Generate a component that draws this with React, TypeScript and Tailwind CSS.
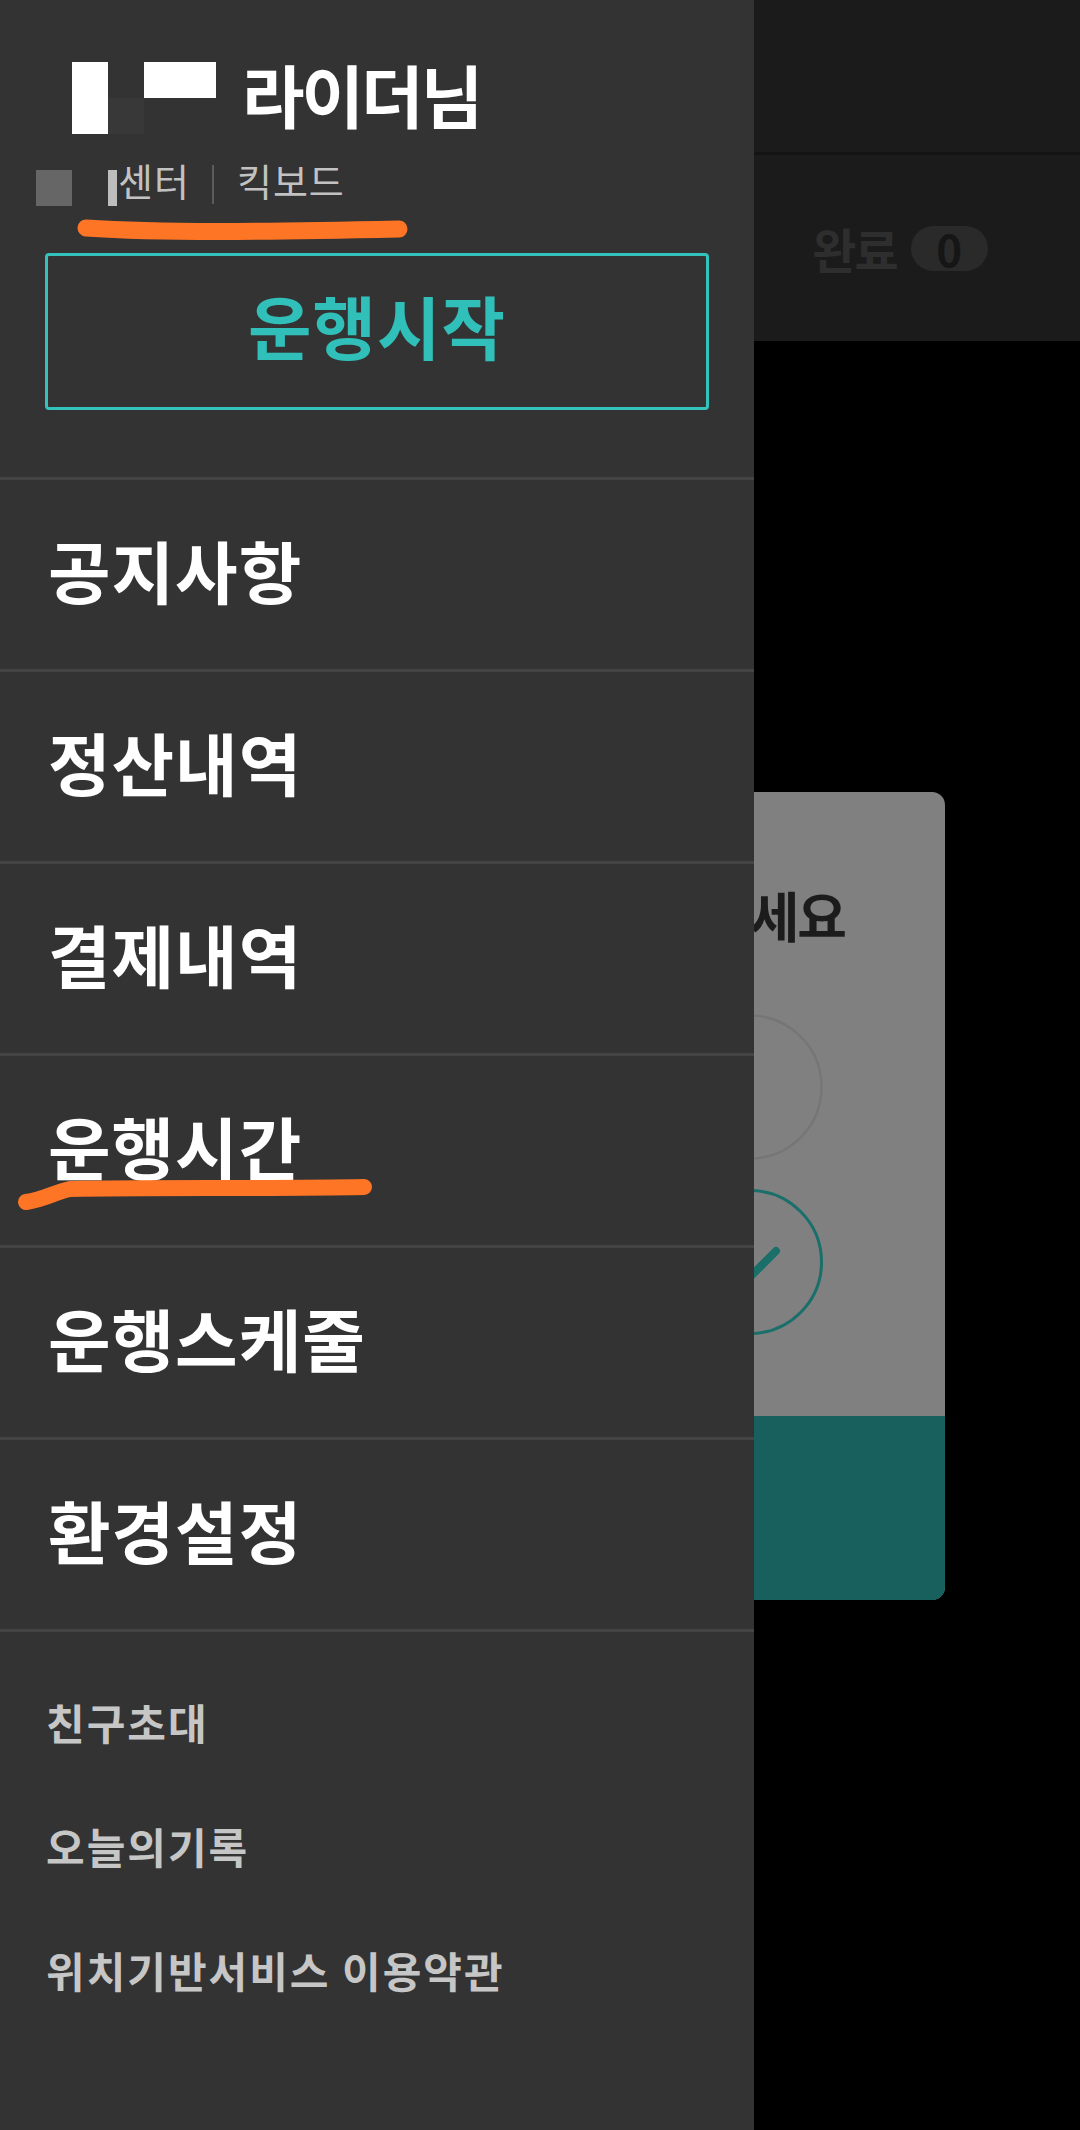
import React from 'react'

const font = { fontFamily: '"Noto Sans CJK KR", "Noto Sans", sans-serif' }

const menuItems = ['공지사항', '정산내역', '결제내역', '운행시간', '운행스케줄', '환경설정']
const subItems = ['친구초대', '오늘의기록', '위치기반서비스 이용약관']

function Background() {
  return (
    <div className="absolute inset-0 flex flex-col bg-black">
      <div className="h-[155px] bg-[#1b1b1b] border-b-[3px] border-[#141414]" />
      <div className="h-[186px] bg-[#1b1b1b] grid grid-cols-3">
        <div className="flex items-center justify-center text-[48px] font-bold text-[#2c2c2c]">대기</div>
        <div className="flex items-center justify-center text-[48px] font-bold text-[#2c2c2c]">진행</div>
        <div className="flex items-center justify-center gap-[14px]">
          <span className="text-[48px] font-bold leading-none tracking-[-2px] text-[#2e2e2e]">완료</span>
          <span className="w-[77px] h-[45px] rounded-full bg-[#2a2a2a] flex items-center justify-center text-[44px] font-bold leading-none text-[#161616]">
            0
          </span>
        </div>
      </div>

      {/* dimmed dialog behind the drawer */}
      <div className="absolute left-[135px] top-[792px] w-[810px] h-[808px] rounded-[13px] overflow-hidden bg-[#808080] flex flex-col">
        <div className="flex-1 flex flex-col">
          <div className="flex justify-end pr-[100px] pt-[96px]">
            <span className="text-[54px] font-bold leading-none tracking-[-2px] text-[#1c1c1c]">운행방식을 선택하세요</span>
          </div>
          <div className="flex flex-col items-end pr-[122px] pt-[72px] gap-[29px]">
            <svg width="146" height="146" viewBox="0 0 146 146">
              <circle cx="73" cy="73" r="71.5" fill="none" stroke="#767676" strokeWidth="2.5" />
            </svg>
            <svg width="146" height="146" viewBox="0 0 146 146">
              <circle cx="73" cy="73" r="71.5" fill="none" stroke="#1a6f6b" strokeWidth="3" />
              <path d="M48 73 L68 93 L99 62" fill="none" stroke="#1a6f6b" strokeWidth="8" strokeLinecap="round" strokeLinejoin="round" />
            </svg>
          </div>
        </div>
        <div className="h-[184px] bg-[#17605e]" />
      </div>
    </div>
  )
}

function Drawer() {
  return (
    <div className="absolute left-0 top-0 w-[754px] h-[2130px] bg-[#333333] flex flex-col">
      <div className="h-[477px] flex flex-col">
        <div className="mt-[62px] h-[72px] flex items-center">
          <div className="ml-[72px] w-[36px] h-[72px] bg-white" />
          <div className="w-[36px] h-[72px] flex flex-col">
            <div className="h-[36px]" />
            <div className="h-[36px] bg-[#383838]" />
          </div>
          <div className="w-[72px] h-[72px] flex flex-col">
            <div className="h-[36px] bg-white" />
          </div>
          <span className="ml-[26px] pb-[8px] text-[68px] font-bold leading-none tracking-[-3px] text-white">라이더님</span>
        </div>
        <div className="mt-[28px] h-[44px] flex items-center text-[38px] leading-none text-[#c2c2c2] tracking-[1px]">
          <div className="ml-[36px] w-[36px] h-[36px] self-end bg-[#666666]" />
          <div className="ml-[36px] w-[9px] h-[36px] self-end bg-[#bdbdbd]" />
          <span className="ml-[1px] pb-[8px]">센터</span>
          <div className="ml-[22px] w-[2px] h-[39px] bg-[#5c5c5c]" />
          <span className="ml-[23px] pb-[8px]">킥보드</span>
        </div>
        <div className="mt-[47px] mx-[45px] h-[157px] border-[3px] border-[#33c2bc] rounded-[4px] flex items-center justify-center">
          <span className="pb-[12px] text-[69px] font-bold leading-none tracking-[1px] text-[#30c0b9]">운행시작</span>
        </div>
      </div>

      <div className="border-t-[3px] border-[#444444]">
        {menuItems.map((item) => (
          <div key={item} className="h-[192px] border-b-[3px] border-[#444444] flex items-center pl-[48px]">
            <span className="pb-[9px] text-[68px] font-bold leading-none tracking-[1px] text-white">{item}</span>
          </div>
        ))}
      </div>

      <div className="pt-[32px] flex flex-col">
        {subItems.map((item) => (
          <div key={item} className="h-[124px] flex items-center pl-[46px]">
            <span className="pb-[8px] text-[42px] font-bold leading-none tracking-[2px] text-[#c6c6c6]">{item}</span>
          </div>
        ))}
      </div>

      {/* hand-drawn orange marks */}
      <svg className="absolute left-0 top-0 pointer-events-none" width="754" height="1240" viewBox="0 0 754 1240">
        <path d="M86 228 C 160 233, 260 232, 399 229" fill="none" stroke="#ff7526" strokeWidth="17" strokeLinecap="round" />
        <path d="M26 1202 C 45 1199, 55 1192, 70 1189 C 150 1187, 260 1189, 364 1187" fill="none" stroke="#ff7526" strokeWidth="16" strokeLinecap="round" />
      </svg>
    </div>
  )
}

export default function App() {
  return (
    <div className="relative w-[1080px] h-[2130px] overflow-hidden bg-black" style={font}>
      <Background />
      <Drawer />
    </div>
  )
}
